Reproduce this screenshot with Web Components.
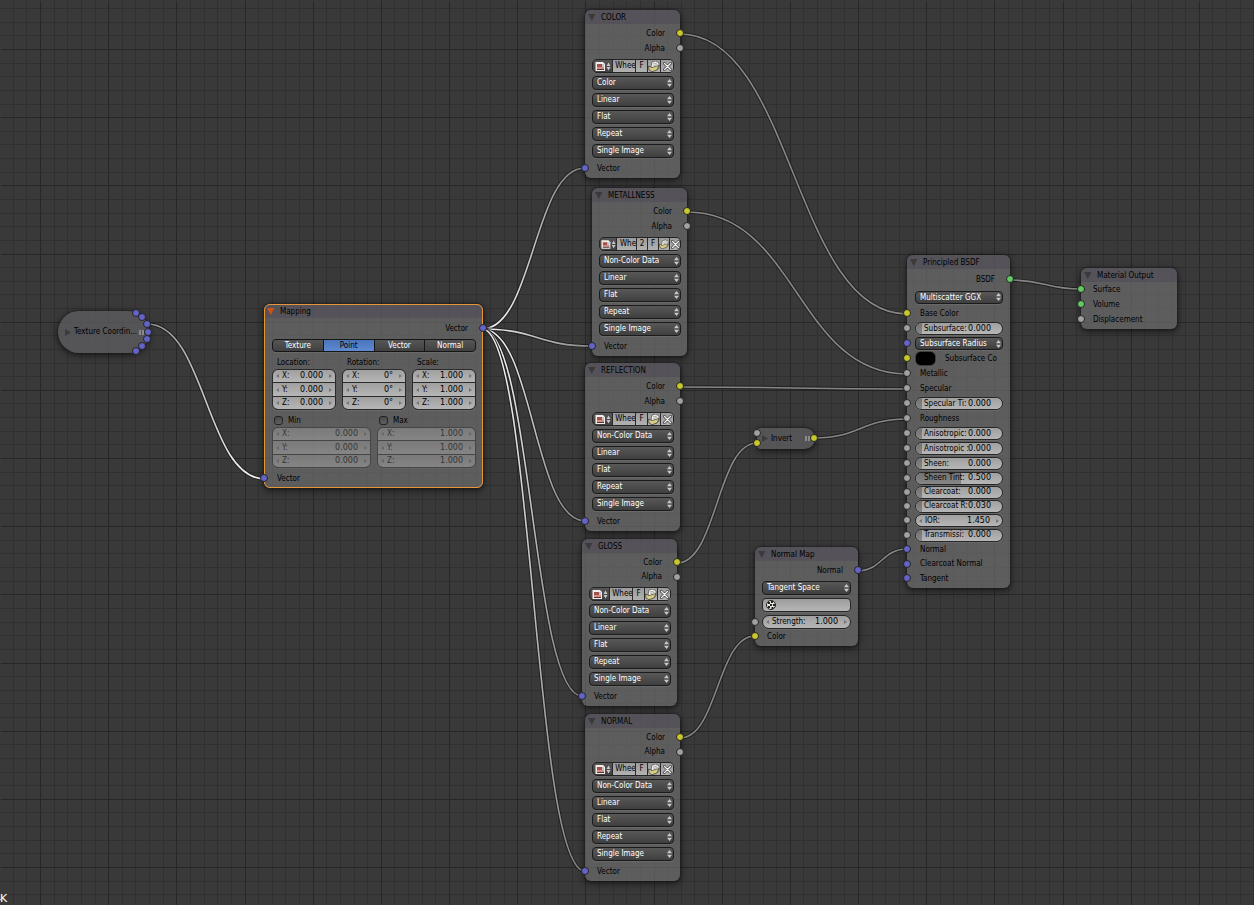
<!DOCTYPE html>
<html lang="en">
<head>
<meta charset="utf-8">
<title>Node Editor</title>
<style>
html, body { margin: 0; height: 100%; background: #393939; }
</style>
</head>
<body>
<node-canvas>
  <mini-node name="Texture Coordin..." style="left:58px;top:311px;width:91px;height:42px;--round:21px" pad="7"
    sockets="78,2,v 84,6,v 89,13,v 90,21,v 89,28,v 84,35,v 78,40,v"></mini-node>

  <node-card name="Mapping" selected style="left:264px;top:304px;width:219px;--indent:13px">
    <node-row out="v" style="--top:3px">Vector</node-row>
    <ui-segments options="Texture,Point,Vector,Normal" active="Point"></ui-segments>
    <ui-columns style="--top:4px">
      <ui-vector name="Location:" values="0.000,0.000,0.000"></ui-vector>
      <ui-vector name="Rotation:" values="0°,0°,0°"></ui-vector>
      <ui-vector name="Scale:" values="1.000,1.000,1.000"></ui-vector>
    </ui-columns>
    <ui-columns style="--top:4px">
      <ui-vector name="Min" check values="0.000,0.000,0.000"></ui-vector>
      <ui-vector name="Max" check values="1.000,1.000,1.000"></ui-vector>
    </ui-columns>
    <node-row in="v" style="--top:3px">Vector</node-row>
  </node-card>

  <image-node name="COLOR" space="Color" style="left:585px;top:10px"></image-node>
  <image-node name="METALLNESS" space="Non-Color Data" users="2" style="left:592px;top:188px"></image-node>
  <image-node name="REFLECTION" space="Non-Color Data" style="left:585px;top:363px"></image-node>
  <image-node name="GLOSS" space="Non-Color Data" compact style="left:582px;top:539px"></image-node>
  <image-node name="NORMAL" space="Non-Color Data" compact style="left:585px;top:714px"></image-node>

  <mini-node name="Invert" style="left:757px;top:428px;width:58px;height:21px;--round:4px 11px 11px 4px" pad="5"
    sockets="0,5,g 0,15,y 57,10,y"></mini-node>

  <node-card name="Normal Map" style="left:755px;top:547px;width:103px;--pad:7px">
    <node-row out="v" style="--top:2px">Normal</node-row>
    <node-row wide style="--top:3px"><ui-select value="Tangent Space" label="Space"></ui-select></node-row>
    <node-row wide style="--top:3px"><ui-uvfield></ui-uvfield></node-row>
    <node-row wide in="g" style="--top:3px"><ui-number name="Strength:" value="1.000" tall></ui-number></node-row>
    <node-row in="y">Color</node-row>
  </node-card>

  <node-card name="Principled BSDF" style="left:907px;top:255px;width:103px;--indent:13px;--pad:7px;--pad-left:8px">
    <node-row out="e" style="--top:3px">BSDF</node-row>
    <node-row wide style="--top:3px;--end:2px"><ui-select value="Multiscatter GGX" label="Distribution" low></ui-select></node-row>
    <node-row in="y">Base Color</node-row>
    <node-row wide tall in="g"><ui-number slider name="Subsurface:" value="0.000"></ui-number></node-row>
    <node-row wide tall in="v"><ui-select value="Subsurface Radius" label="Radius" low></ui-select></node-row>
    <node-row wide tall in="y"><ui-swatch name="Subsurface Co"></ui-swatch></node-row>
    <node-row in="g">Metallic</node-row>
    <node-row in="g">Specular</node-row>
    <node-row wide tall in="g"><ui-number slider name="Specular Ti:" value="0.000"></ui-number></node-row>
    <node-row in="g">Roughness</node-row>
    <node-row wide tall in="g"><ui-number slider name="Anisotropic:" value="0.000"></ui-number></node-row>
    <node-row wide tall in="g"><ui-number slider name="Anisotropic :" value="0.000"></ui-number></node-row>
    <node-row wide tall in="g"><ui-number slider name="Sheen:" value="0.000"></ui-number></node-row>
    <node-row wide in="g"><ui-number slider name="Sheen Tint:" value="0.500" fill="52"></ui-number></node-row>
    <node-row wide in="g"><ui-number slider name="Clearcoat:" value="0.000"></ui-number></node-row>
    <node-row wide in="g"><ui-number slider name="Clearcoat R:" value="0.030"></ui-number></node-row>
    <node-row wide tall in="g"><ui-number name="IOR:" value="1.450"></ui-number></node-row>
    <node-row wide in="g"><ui-number slider name="Transmissi:" value="0.000"></ui-number></node-row>
    <node-row in="v">Normal</node-row>
    <node-row short in="v">Clearcoat Normal</node-row>
    <node-row in="v">Tangent</node-row>
  </node-card>

  <node-card name="Material Output" style="left:1081px;top:268px;width:96px">
    <node-row in="e">Surface</node-row>
    <node-row in="e">Volume</node-row>
    <node-row in="g">Displacement</node-row>
  </node-card>
</node-canvas>

<script>
const define = (tag, html, setup) => {
  const template = document.createElement('template');
  customElements.define(tag, class extends HTMLElement {
    connectedCallback() {
      if (this.shadowRoot) return;
      template.innerHTML = typeof html === 'function' ? html(this) : html;
      this.attachShadow({ mode: 'open' }).append(template.content.cloneNode(true));
      if (setup) setup(this, this.shadowRoot);
    }
  });
};
const COLORS = { y: '#c8c82c', g: '#a1a1a1', v: '#6464c8', e: '#64c864' };
const socketCss = `.socket { position: absolute; width: 6px; height: 6px; border: 1px solid #242424; border-radius: 50%; z-index: 2; }`;

/* Editor surface: grid, noodles, then the nodes. */
define('node-canvas', `
<style>
:host { display: block; position: relative; min-height: 100vh; overflow: hidden; background: #393939;
  font: 8px/12px "DejaVu Sans Condensed", "Open Sans", sans-serif; color: #000; }
svg { position: absolute; inset: 0; width: 100%; height: 100%; }
.frame { position: absolute; left: 0; bottom: 0; font: 11px/13px "DejaVu Sans", sans-serif; color: #fff; }
.frame::before { content: ""; position: absolute; left: 0; top: 7px; width: 1px; height: 1px; background: #ccc; }
</style>
<svg aria-hidden="true"><g class="grid" shape-rendering="crispEdges"></g><g class="links" fill="none"></g></svg>
<slot></slot>
<div class="frame">K</div>`, (host, root) => {
  const minor = [], major = [];
  for (let i = -5; i < 200; i++) {
    const step = Math.round(i * 409 / 30);
    (i % 5 ? minor : major).push(`M${step + 40} 0v4000`, `M0 ${step + 49}h4000`);
  }
  root.querySelector('.grid').innerHTML =
    `<g transform="translate(.5 .5)" stroke-width="1"><path d="${minor.join('')}" stroke="#303030"/><path d="${major.join('')}" stroke="#272727"/></g>`;
  const hi = '#f4f4f4', lo = '#868686';
  const links = [
    [147, 324, 265, 479, '#9a9a9a', hi],
    [482, 329, 585, 168, hi, lo], [482, 329, 592, 346, hi, lo], [482, 329, 585, 521, hi, lo],
    [482, 329, 582, 696, hi, lo], [482, 329, 585, 871, hi, lo],
    [680, 34, 907, 314, lo, lo], [687, 212, 907, 374, lo, lo], [680, 387, 907, 389, lo, lo],
    [677, 563, 757, 443, lo, lo], [680, 738, 755, 636, lo, lo],
    [814, 438, 907, 419, lo, lo], [857, 571, 907, 549, lo, lo], [1010, 280, 1081, 289, lo, lo]
  ];
  root.querySelector('.links').innerHTML = links.map(([x1, y1, x2, y2, a, b], i) => {
    const h = (x2 - x1) / 2;
    const d = `M${x1} ${y1}C${x1 + h} ${y1} ${x2 - h} ${y2} ${x2} ${y2}`;
    return `<linearGradient id="n${i}" gradientUnits="userSpaceOnUse" x1="${x1}" y1="${y1}" x2="${x2}" y2="${y2}">
      <stop stop-color="${a}"/><stop offset="1" stop-color="${b}"/></linearGradient>
      <path d="${d}" stroke="#181818" stroke-opacity=".75" stroke-width="3.500"/><path d="${d}" stroke="url(#n${i})" stroke-width="1.600"/>`;
  }).join('');
});

/* Expanded node: header plus stacked rows. */
define('node-card', host => `
<style>
:host { display: block; position: absolute; box-sizing: border-box; border-radius: 6px; padding-bottom: 2px;
  background: rgba(108,108,108,.7); box-shadow: 0 0 1px 1px rgba(20,20,20,.3), 0 2px 6px 1px rgba(0,0,0,.5); }
:host([selected])::after { content: ""; position: absolute; inset: 0; border: 1px solid #e8953a; border-radius: 6px; pointer-events: none; }
header { display: flex; align-items: center; height: 14px; background: rgba(76,72,84,.45); border-radius: 6px 6px 0 0; }
button { all: unset; width: 16px; height: 14px; display: grid; place-items: center start; padding-left: 3px; box-sizing: border-box; }
svg { width: 8px; height: 7px; }
h2 { margin: 2px 0 0; font: inherit; white-space: nowrap; }
</style>
<header><button aria-label="Collapse"><svg viewBox="0 0 8 7"><path d="M0 0h7.500L3.750 7z" fill="${host.hasAttribute('selected') ? '#cc5418' : '#3a3a3c'}"/></svg></button><h2>${host.getAttribute('name')}</h2></header>
<slot></slot>`);

/* Collapsed node with its sockets around the rim. */
define('mini-node', host => `
<style>
:host { display: flex; align-items: center; position: absolute; box-sizing: border-box; border-radius: var(--round); padding-left: ${host.getAttribute('pad')}px;
  background: rgba(92,91,94,.8); box-shadow: 0 0 1px 1px rgba(20,20,20,.3), 0 2px 6px 1px rgba(0,0,0,.5); }
button { all: unset; display: grid; width: 9px; }
svg { width: 6px; height: 7px; }
.name { white-space: nowrap; }
.grip { position: absolute; right: 5px; width: 1px; height: 5px; border: solid #8a8a8a; border-width: 0 2px; }
${socketCss}
</style>
<button aria-label="Expand"><svg viewBox="0 0 6 7"><path d="M0 0v7L6 3.500z" fill="#3c3c3e"/></svg></button>
<span class="name">${host.getAttribute('name')}</span><span class="grip"></span>
${host.getAttribute('sockets').split(' ').map(s => { const [x, y, c] = s.split(',');
  return `<i class="socket" style="left:${x - 4}px;top:${y - 4}px;background:${COLORS[c]}"></i>`; }).join('')}`);

/* One line of a node, with an optional input or output socket. */
define('node-row', host => `
<style>
:host { display: flex; align-items: center; position: relative; box-sizing: border-box; height: 15px; padding: 0 15px 0 var(--indent, 12px);
  margin: var(--top, 0px) 0 var(--end, 0px); white-space: nowrap; }
:host([out]) { justify-content: flex-end; }
:host([short]), :host([wide]) { height: 14px; }
:host([wide]) { padding: 0 var(--pad, 6px) 0 var(--pad-left, 7px); }
:host([wide][tall]) { height: 15px; }
${socketCss}
.socket { top: 3px; }
.in { left: -4px; } .out { right: -4px; }
</style>
${host.hasAttribute('in') ? `<i class="socket in" style="background:${COLORS[host.getAttribute('in')]}"></i>` : ''}
<slot></slot>
${host.hasAttribute('out') ? `<i class="socket out" style="background:${COLORS[host.getAttribute('out')]}"></i>` : ''}`);

define('ui-select', host => `
<style>
:host { display: block; position: relative; flex: 1; min-width: 0; height: 14px; }
:host([low]) { height: 13px; }
select { appearance: none; display: block; box-sizing: border-box; width: 100%; height: 100%; margin: 0; padding: 0 8px 0 4px; border: 1px solid #1b1b1b;
  border-radius: 4px; background: linear-gradient(#585858, #3f3f3f); box-shadow: 0 1px 0 rgba(255,255,255,.08); font: inherit; color: #fff; }
svg { position: absolute; right: 2px; top: 50%; margin-top: -4px; width: 5px; height: 8px; pointer-events: none; }
</style>
<select aria-label="${host.getAttribute('label')}"><option>${host.getAttribute('value')}</option></select>
<svg viewBox="0 0 5 8"><path d="M2.500 0L5 3.300H0zM2.500 8L5 4.700H0z" fill="#c9c9c9"/></svg>`);

const fieldCss = `
.field { display: flex; align-items: center; position: relative; box-sizing: border-box; height: 13px; background: linear-gradient(#a0a0a0, #b6b6b6); }
.field label { position: relative; flex: 1; min-width: 0; overflow: hidden; white-space: nowrap; }
.field input { all: unset; position: relative; width: 24px; font: 8px/12px "DejaVu Sans", sans-serif; text-align: right; }
.field svg { position: relative; flex: none; width: 3px; height: 4px; }`;
const leftArrow = '<svg viewBox="0 0 3 4"><path d="M3 0v4L0 2z" fill="#777"/></svg>';
const rightArrow = '<svg viewBox="0 0 3 4"><path d="M0 0v4L3 2z" fill="#777"/></svg>';

/* Number box; with "slider" it shows a filled track in place of the arrows. */
define('ui-number', host => {
  const slider = host.hasAttribute('slider');
  return `
<style>
:host { display: block; flex: 1; min-width: 0; }
${fieldCss}
.field { border: 1px solid #262626; border-radius: 7px; overflow: hidden; padding: 0 ${slider ? '11px 0 8px' : '3px 0 3px'}; box-shadow: 0 1px 0 rgba(255,255,255,.08); }
:host([tall]) .field { height: 14px; }
.field label { padding-left: ${slider ? 0 : 3}px; overflow: ${slider ? 'visible' : 'hidden'}; }
.field input { margin-right: ${slider ? 0 : 6}px; }
.fill { position: absolute; inset: 0 auto 0 0; width: 6px; background: linear-gradient(#727272, #868686); }
</style>
<div class="field">${slider ? `<span class="fill" style="${host.hasAttribute('fill') ? `width:${host.getAttribute('fill')}%` : ''}"></span>` : leftArrow}
<label for="v">${host.getAttribute('name')}</label><input id="v" type="text" value="${host.getAttribute('value')}">${slider ? '' : rightArrow}</div>`;
});

/* Three stacked X / Y / Z boxes under a caption or a tick box. */
define('ui-vector', host => {
  const name = host.getAttribute('name'), check = host.hasAttribute('check');
  return `
<style>
:host { display: block; flex: 1; min-width: 0; }
.head { display: flex; align-items: center; height: 13px; padding-left: ${check ? 2 : 5}px; white-space: nowrap; }
.head input { appearance: none; box-sizing: border-box; width: 9px; height: 9px; margin: 0 5px 0 0; border: 1px solid #222; border-radius: 3px; background: linear-gradient(#484848, #606060); }
.stack { display: grid; row-gap: 1px; box-sizing: border-box; border: 1px solid #2b2b2b; border-radius: 6px; overflow: hidden; background: #2b2b2b; box-shadow: 0 1px 0 rgba(255,255,255,.08); }
.stack.off { opacity: .45; }
${fieldCss}
.field { padding: 0 3px; }
.field:nth-child(odd) { height: 12px; }
.field label { padding-left: 3px; }
.field input { width: 26px; margin-right: 6px; }
</style>
<div class="head">${check ? `<input type="checkbox" id="on"><label for="on">${name}</label>` : name}</div>
<div class="stack${check ? ' off' : ''}">${host.getAttribute('values').split(',').map((v, i) =>
  `<div class="field">${leftArrow}<label for="f${i}">${'XYZ'[i]}:</label><input id="f${i}" type="text" value="${v}">${rightArrow}</div>`).join('')}</div>`;
});

define('ui-columns', `
<style>:host { display: flex; gap: 6px; margin: var(--top, 0px) 7px 0 8px; }</style><slot></slot>`);

define('ui-segments', host => `
<style>
:host { display: flex; box-sizing: border-box; height: 13px; margin: 3px 7px 0 8px; gap: 1px; border: 1px solid #161616; border-radius: 4px; overflow: hidden; background: #161616; box-shadow: 0 1px 0 rgba(255,255,255,.08); }
button { flex: 1; margin: 0; padding: 0; border: 0; font: inherit; line-height: 11px; color: #fff; background: linear-gradient(#565656, #404040); }
button[aria-pressed=true] { color: #000; background: linear-gradient(#4a74bb, #5f8ad2); }
</style>
${host.getAttribute('options').split(',').map(o => `<button aria-pressed="${o === host.getAttribute('active')}">${o}</button>`).join('')}`);

define('ui-uvfield', `
<style>
:host { display: flex; align-items: center; flex: 1; min-width: 0; box-sizing: border-box; height: 14px; padding-left: 3px; border: 1px solid #262626; border-radius: 4px; background: linear-gradient(#9c9c9c, #b6b6b6); box-shadow: 0 1px 0 rgba(255,255,255,.08); }
svg { width: 10px; height: 10px; flex: none; }
input { all: unset; flex: 1; width: 0; min-width: 0; }
</style>
<svg viewBox="0 0 10 10"><circle cx="5" cy="5" r="4.500" fill="#e8e8e0" stroke="#1c1c1c"/><path d="M2 2h2v2H2zM5 1h2v2H5zM4 4h2v2H4zM7 4h2v2H7zM2 6h2v2H2zM5.500 7h2v2h-2z" fill="#222"/></svg>
<input type="text" aria-label="UV map">`);

define('ui-swatch', host => `
<style>
:host { display: flex; flex: 1; align-items: center; gap: 10px; padding-left: 1px; }
input { appearance: none; width: 19px; height: 13px; margin: 0; padding: 0; border: 0; border-radius: 5px; background: #000; box-shadow: 0 0 0 1px rgba(30,30,30,.5); }
input::-webkit-color-swatch-wrapper { padding: 0; }
input::-webkit-color-swatch { border: 0; border-radius: 5px; }
</style>
<input type="color" id="c" value="#000000"><label for="c">${host.getAttribute('name')}</label>`);

/* Datablock selector of an image texture. */
define('image-picker', host => `
<style>
:host { display: grid; grid-template-columns: ${host.hasAttribute('users') ? '16px minmax(0, 1fr) 10px 10px 10px 10px' : '19px minmax(0, 1fr) 11px 12px 12px'}; column-gap: 1px; flex: 1; min-width: 0; box-sizing: border-box; height: 14px;
  border: 1px solid #232323; border-radius: 5px; overflow: hidden; background: #2a2a2a; box-shadow: 0 1px 0 rgba(255,255,255,.08); }
button, input { all: unset; box-sizing: border-box; display: grid; place-items: center; min-width: 0; width: 100%; height: 12px; line-height: 12px; overflow: hidden; background: linear-gradient(#9b9b9b, #b2b2b2); }
input { display: block; padding-left: 3px; color: #000; }
.browse { background: linear-gradient(#555, #404040); }
svg { display: block; max-width: 100%; }
</style>
<button class="browse" aria-label="Browse image"><svg width="17" height="11" viewBox="0 0 17 11">
<path d="M1.500 1h7.500l2 2v7H1.500z" fill="#f4ece8"/><path d="M3 3h5v3H3z" fill="#a0524a"/><path d="M3 6h7v2H3z" fill="#d98d80"/><path d="M8 3h2v3H8z" fill="#b9c4d8"/><path d="M3 8h7v1H3z" fill="#4b3638"/>
<path d="M14.500 1.500L16.500 5h-4zM14.500 9.500L16.500 6h-4z" fill="#c9c9c9"/></svg></button>
<input type="text" aria-label="Image name" value="${host.hasAttribute('users') ? 'Whe' : 'Whee'}">
${host.hasAttribute('users') ? `<button>${host.getAttribute('users')}</button>` : ''}
<button>F</button>
<button aria-label="Open image"><svg width="12" height="11" viewBox="0 0 12 11"><path d="M4 1l4-1 3 2v5l-5 2-3-3z" fill="#f4f4ee" stroke="#333" stroke-width=".6"/><path d="M0.500 5l3.500 1.500L11 4.500 9 9l-5 1.700L1 9z" fill="#d6cc85" stroke="#333" stroke-width=".7"/><path d="M5 3l4-1M5.500 4.500l4-1" stroke="#888" stroke-width=".7"/></svg></button>
<button aria-label="Unlink image"><svg width="9" height="9" viewBox="0 0 10 10"><path d="M1.500 1.500l7 7M8.500 1.500l-7 7" stroke="#333" stroke-width="3" stroke-linecap="round"/><path d="M1.500 1.500l7 7M8.500 1.500l-7 7" stroke="#f2f2f2" stroke-width="1.500" stroke-linecap="round"/></svg></button>`);

/* Image texture node. */
define('image-node', host => `
<style>
:host { display: block; position: absolute; width: 95px; }
node-card { position: relative; }
</style>
<node-card name="${host.getAttribute('name')}">
  <node-row out="y" style="--top:2px">Color</node-row>
  <node-row out="g" ${host.hasAttribute('compact') ? 'short' : ''}>Alpha</node-row>
  <node-row wide style="--top:3px"><image-picker ${host.hasAttribute('users') ? `users="${host.getAttribute('users')}"` : ''}></image-picker></node-row>
  ${[[host.getAttribute('space'), 'Color space'], ['Linear', 'Interpolation'], ['Flat', 'Projection'], ['Repeat', 'Extension'], ['Single Image', 'Source']]
    .map(([v, l]) => `<node-row wide style="--top:3px"><ui-select value="${v}" label="${l}"></ui-select></node-row>`).join('')}
  <node-row in="v" style="--top:3px">Vector</node-row>
</node-card>`);
</script>
</body>
</html>
